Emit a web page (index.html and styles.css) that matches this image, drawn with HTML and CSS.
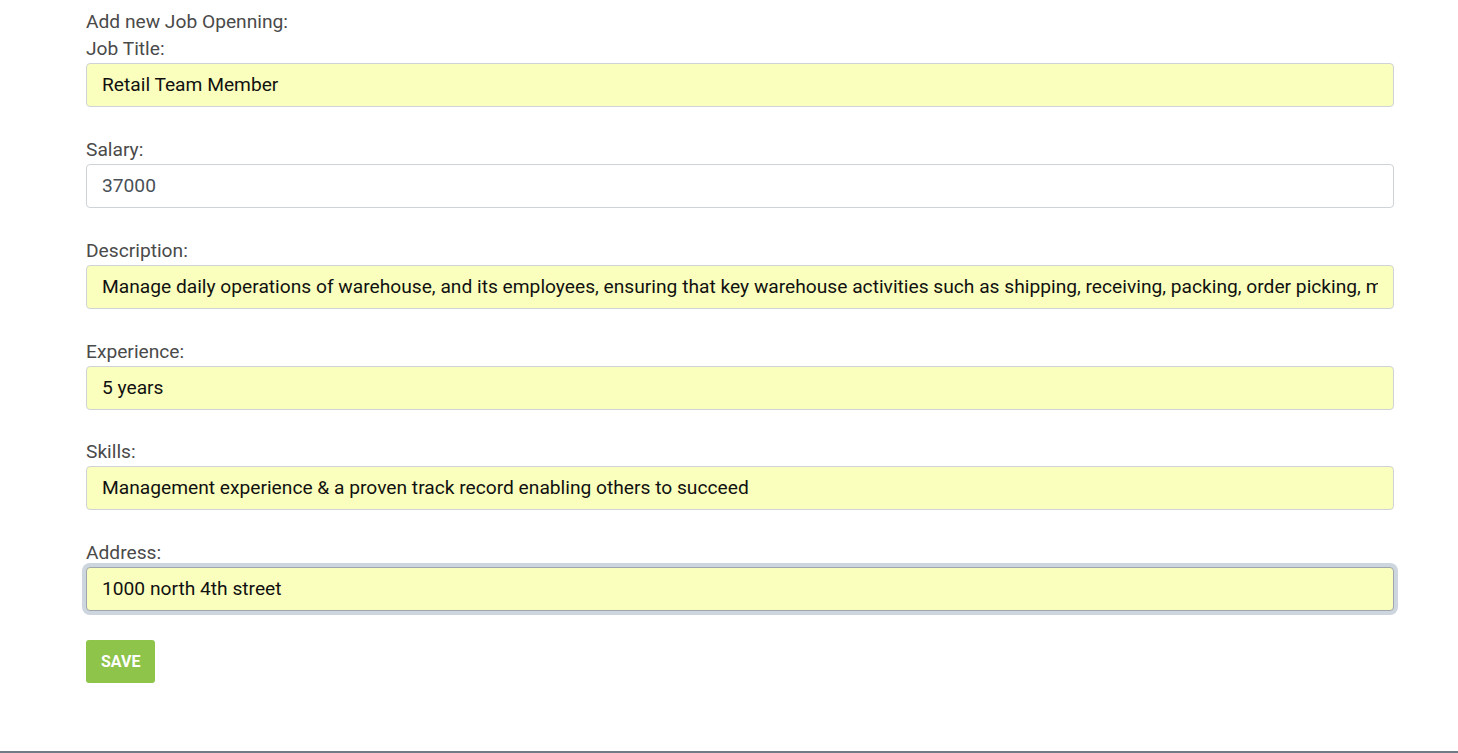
FILE: index.html
```html
<!DOCTYPE html>
<html>
<head>
<meta charset="utf-8">
<link rel="stylesheet" href="styles.css">
</head>
<body>
<div class="page">
  <main class="content">
    <form class="job-form">
      <div class="heading">Add new Job Openning:</div>
      <div class="group">
        <label class="label">Job Title:</label>
        <input class="field autofill" type="text" value="Retail Team Member">
      </div>
      <div class="group">
        <label class="label">Salary:</label>
        <input class="field" type="text" value="37000">
      </div>
      <div class="group">
        <label class="label">Description:</label>
        <input class="field autofill" type="text" value="Manage daily operations of warehouse, and its employees, ensuring that key warehouse activities such as shipping, receiving, packing, order picking, maintenance and inventory are carried out">
      </div>
      <div class="group">
        <label class="label">Experience:</label>
        <input class="field autofill" type="text" value="5 years">
      </div>
      <div class="group">
        <label class="label">Skills:</label>
        <input class="field autofill" type="text" value="Management experience &amp; a proven track record enabling others to succeed">
      </div>
      <div class="group">
        <label class="label">Address:</label>
        <input class="field autofill focused" type="text" value="1000 north 4th street">
      </div>
      <button class="save" type="button">SAVE</button>
    </form>
  </main>
  <footer class="footer"></footer>
</div>
</body>
</html>
```
FILE: styles.css
```css
html, body {
  margin: 0;
  padding: 0;
}
body {
  font-family: Roboto, "Liberation Sans", Arial, sans-serif;
  background: #ffffff;
  color: #4a4a4a;
}
.page {
  display: flex;
  flex-direction: column;
  height: 100vh;
}
.content {
  flex: 1;
  padding: 8px 0 0 86px;
}
.job-form {
  width: 1308px;
  display: flex;
  flex-direction: column;
  align-items: flex-start;
}
.heading, .label {
  display: block;
  font-size: 19.2px;
  line-height: 27px;
  color: #4a4a4a;
}
.group {
  width: 100%;
  margin-bottom: 29px;
}
.group:nth-child(5) {
  margin-bottom: 28px;
}
.field {
  display: block;
  box-sizing: border-box;
  width: 100%;
  height: 44px;
  margin-top: 1px;
  padding: 6px 15px 8px;
  font-family: Roboto, "Liberation Sans", Arial, sans-serif;
  font-size: 19.2px;
  line-height: 28px;
  color: #495057;
  background: #ffffff;
  border: 1px solid #cfd2d6;
  border-radius: 4px;
  outline: none;
}
.field.autofill {
  background: #faffbd;
  color: #111111;
}
.field.focused {
  border-color: #9fa6ad;
  box-shadow: 0 0 0 4px #cdd5df;
}
.save {
  height: 43px;
  padding: 0 15px;
  font-family: Roboto, "Liberation Sans", Arial, sans-serif;
  font-size: 16px;
  font-weight: 700;
  color: #ffffff;
  background: #8dc449;
  border: none;
  border-radius: 3px;
}
.footer {
  height: 0;
  border-top: 2px solid #6f7b87;
}
```
